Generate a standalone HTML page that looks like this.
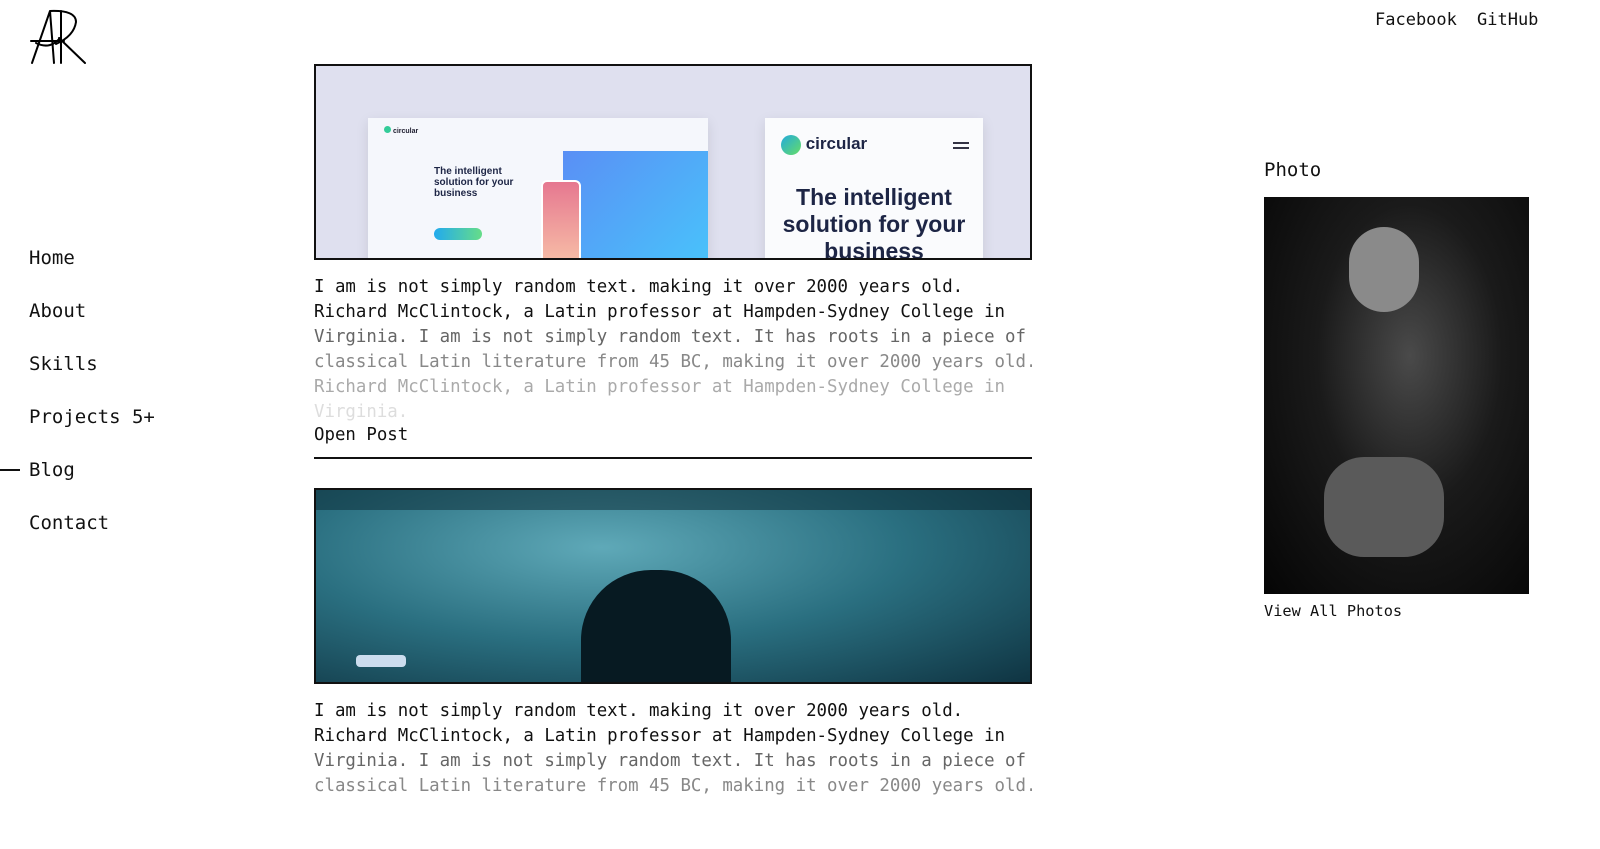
<!DOCTYPE html>
<html><head><meta charset="utf-8"><style>
*{margin:0;padding:0;box-sizing:border-box}
body{width:1600px;height:796px;overflow:hidden;background:#fff;font-family:"DejaVu Sans Mono","Liberation Mono",monospace;color:#111;position:relative}
.nav a{position:absolute;left:29px;font-size:19px;color:#111;text-decoration:none;line-height:22px}
.top{position:absolute;top:10px;font-size:17px}
.card{position:absolute;left:314px;width:718px}
.img{height:196px;border:2px solid #111;overflow:hidden;position:relative}
.txt{font-size:17.4px;line-height:25px;margin-top:15px;height:150px;overflow:hidden;white-space:pre}
.op{font-size:17.4px;line-height:22px}
.rule{border-bottom:2px solid #111;margin-top:11px}
</style></head><body>
<svg style="position:absolute;left:28px;top:8px" width="62" height="58" viewBox="0 0 62 58" fill="none" stroke="#000" stroke-width="2" stroke-linecap="round">
<path d="M4 55 L22 3 L26 55"/><path d="M3 33 L36 33"/><path d="M33 3 L33 55"/><path d="M22 3 Q48 2 48 14 Q46 28 28 36"/><path d="M31 30 L57 55"/><path d="M8 35 Q22 42 32 30"/>
</svg>
<div class="top" style="left:1375px">Facebook</div>
<div class="top" style="left:1477px">GitHub</div>
<div class="nav">
<a style="top:247px">Home</a><a style="top:300px">About</a><a style="top:353px">Skills</a><a style="top:406px">Projects 5+</a><a style="top:459px">Blog</a><a style="top:512px">Contact</a>
</div>
<div style="position:absolute;left:0;top:469px;width:20px;height:2px;background:#111"></div>

<div class="card" style="top:64px">
<div class="img" style="background:#dfe0ef">
<div style="position:absolute;left:52px;top:52px;width:340px;height:150px;background:#f5f7fc;box-shadow:0 4px 12px rgba(0,0,0,.1)">
<div style="position:absolute;left:16px;top:8px;font:bold 7px sans-serif;color:#223"><span style="display:inline-block;width:7px;height:7px;border-radius:50%;background:#3c9"></span> circular</div>
<div style="position:absolute;left:66px;top:48px;font:bold 10px 'Liberation Sans',sans-serif;color:#1d2545;width:80px;line-height:11px">The intelligent solution for your business</div>
<div style="position:absolute;left:66px;top:110px;width:48px;height:12px;border-radius:6px;background:linear-gradient(90deg,#2ae,#6d8)"></div>
<div style="position:absolute;left:195px;top:33px;width:145px;height:120px;background:linear-gradient(135deg,#5a8ff5,#48c4fb)"></div>
<div style="position:absolute;left:173px;top:62px;width:40px;height:90px;border-radius:6px;border:2px solid #fff;background:linear-gradient(#e67890,#f8c2a8)"></div>
</div>
<div style="position:absolute;left:449px;top:52px;width:218px;height:150px;background:#fafbfd;box-shadow:0 4px 12px rgba(0,0,0,.1)">
<div style="position:absolute;left:16px;top:16px;font:bold 17px 'Liberation Sans',sans-serif;color:#1d2545"><span style="display:inline-block;width:20px;height:20px;border-radius:50%;background:linear-gradient(135deg,#2ad,#6d6);vertical-align:middle"></span> circular</div>
<div style="position:absolute;right:14px;top:24px;width:16px;height:7px;border-top:2px solid #334;border-bottom:2px solid #334"></div>
<div style="position:absolute;left:0;width:218px;top:66px;text-align:center;font:bold 23px/27px 'Liberation Sans',sans-serif;color:#1d2545">The intelligent solution for your business</div>
</div>
</div>
<div class="txt"><span style="color:#111">I am is not simply random text. making it over 2000 years old.
Richard McClintock, a Latin professor at Hampden-Sydney College in
</span><span style="color:#666">Virginia. I am is not simply random text. It has roots in a piece of
</span><span style="color:#888">classical Latin literature from 45 BC, making it over 2000 years old.
</span><span style="color:#aaa">Richard McClintock, a Latin professor at Hampden-Sydney College in
</span><span style="color:#ddd">Virginia.</span></div>
<div class="op" style="margin-top:-1px">Open Post</div>
<div class="rule"></div>
</div>

<div class="card" style="top:488px">
<div class="img" style="background:radial-gradient(ellipse at 40% 30%,#5fa9b8,#2a6f80 50%,#0f3442)">
<div style="position:absolute;left:265px;top:80px;width:150px;height:130px;border-radius:70px 70px 0 0;background:#071a22"></div>
<div style="position:absolute;left:40px;top:165px;width:50px;height:12px;border-radius:4px;background:#cde"></div>
<div style="position:absolute;left:0;top:0;width:718px;height:20px;background:rgba(10,40,50,.5)"></div>
</div>
<div class="txt"><span style="color:#111">I am is not simply random text. making it over 2000 years old.
Richard McClintock, a Latin professor at Hampden-Sydney College in
</span><span style="color:#666">Virginia. I am is not simply random text. It has roots in a piece of
</span><span style="color:#888">classical Latin literature from 45 BC, making it over 2000 years old.</span></div>
</div>

<div style="position:absolute;left:1264px;top:159px;font-size:19px">Photo</div>
<div style="position:absolute;left:1264px;top:197px;width:265px;height:397px;background:radial-gradient(ellipse at 55% 40%,#4a4a4a,#1a1a1a 45%,#050505)">
<div style="position:absolute;left:85px;top:30px;width:70px;height:85px;border-radius:40px;background:#8a8a8a"></div>
<div style="position:absolute;left:60px;top:260px;width:120px;height:100px;border-radius:40px;background:#5a5a5a"></div>
</div>
<div style="position:absolute;left:1264px;top:602px;font-size:15.3px">View All Photos</div>
</body></html>
